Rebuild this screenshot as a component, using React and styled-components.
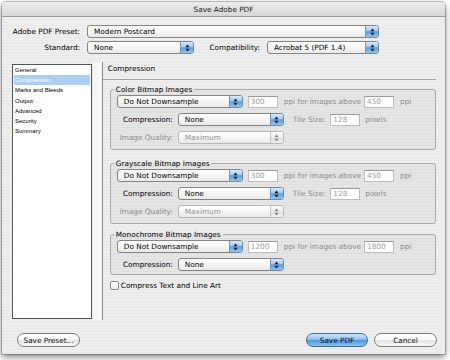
import styled, { createGlobalStyle } from "styled-components";

const GlobalStyle = createGlobalStyle`
  html, body {
    margin: 0;
    padding: 0;
    background: #ffffff;
  }
  body {
    font-family: "DejaVu Sans", "Liberation Sans", sans-serif;
    font-size: 7.3px;
    color: #000;
  }
  #root {
    width: 450px;
    height: 360px;
    overflow: hidden;
  }
`;

const Window = styled.div`
  margin: 2px 0 0 2px;
  width: 443px;
  height: 352px;
  border-radius: 4px 4px 0 0;
  background: repeating-linear-gradient(
    180deg,
    #eeeeee 0,
    #eeeeee 2px,
    #e8e8e8 2px,
    #e8e8e8 3px
  );
  box-shadow: 0 3px 7px rgba(0, 0, 0, 0.5), 0 0 0 1px rgba(0, 0, 0, 0.22);
  display: flex;
  flex-direction: column;
  overflow: hidden;
`;

const TitleBar = styled.div`
  flex: none;
  height: 14px;
  display: flex;
  align-items: center;
  justify-content: center;
  background: linear-gradient(#ededed, #d6d6d6);
  border-bottom: 1px solid #9c9c9c;
  color: #1a1a1a;
`;

const Body = styled.div`
  flex: 1;
  display: flex;
  flex-direction: column;
  padding: 8px 8px 0 10px;
`;

const Row = styled.div`
  display: flex;
  align-items: center;
  gap: ${(p) => p.$gap ?? 7}px;
  height: 13px;
  margin-top: ${(p) => p.$top ?? 0}px;
`;

const Label = styled.span`
  flex: none;
  width: ${(p) => (p.$w ? `${p.$w}px` : "auto")};
  text-align: ${(p) => (p.$w ? "right" : "left")};
  white-space: nowrap;
  color: ${(p) => (p.$dim ? "#8c8c8c" : "#000")};
  margin-left: ${(p) => p.$ml ?? 0}px;
`;

const PopupBox = styled.div`
  flex: none;
  box-sizing: border-box;
  width: ${(p) => p.$w}px;
  height: 13px;
  border: 1px solid ${(p) => (p.$off ? "#b9b9b9" : "#858585")};
  border-radius: 3px;
  background: linear-gradient(#ffffff, #f6f6f6 50%, #e8e8e8);
  display: flex;
  align-items: stretch;
  overflow: hidden;
  color: ${(p) => (p.$off ? "#909090" : "#000")};
`;

const PopupText = styled.span`
  flex: 1;
  padding-left: 6px;
  line-height: 11px;
  white-space: nowrap;
`;

const Cap = styled.span`
  flex: none;
  width: 12px;
  display: flex;
  align-items: center;
  justify-content: center;
  border-left: 1px solid ${(p) => (p.$off ? "#c4c4c4" : "#6f95c4")};
  background: ${(p) =>
    p.$off
      ? "linear-gradient(#fbfbfb, #ececec 50%, #dedede 51%, #f0f0f0)"
      : "linear-gradient(#d6eafc, #9ccaf4 45%, #559fe6 52%, #8cc6f6)"};
`;

const Popup = ({ w, children, off }) => (
  <PopupBox $w={w} $off={off}>
    <PopupText>{children}</PopupText>
    <Cap $off={off}>
      <svg width="5" height="8" viewBox="0 0 5 8">
        <polygon points="0.4,3.3 2.5,0.6 4.6,3.3" fill={off ? "#8a8a8a" : "#1c1c1c"} />
        <polygon points="0.4,4.7 2.5,7.4 4.6,4.7" fill={off ? "#8a8a8a" : "#1c1c1c"} />
      </svg>
    </Cap>
  </PopupBox>
);

const Field = styled.span`
  flex: none;
  box-sizing: border-box;
  width: ${(p) => p.$w}px;
  height: 12px;
  padding-left: 2px;
  line-height: 10px;
  border: 1px solid #bdbdbd;
  border-top-color: #9a9a9a;
  background: #ffffff;
  color: #a0a0a0;
  margin-left: ${(p) => p.$ml ?? 0}px;
`;

const Main = styled.div`
  display: flex;
  margin-top: 8px;
  height: 258px;
`;

const Sidebar = styled.ul`
  list-style: none;
  box-sizing: border-box;
  width: 80px;
  height: 255px;
  margin: 2px 0 0;
  padding: 0 1px;
  border: 1px solid #555555;
  background: #ffffff;
  font-family: "Liberation Sans", "DejaVu Sans", sans-serif;
  font-size: 6px;
`;

const Item = styled.li`
  height: 10.2px;
  line-height: 10.2px;
  padding-left: 1px;
  background: ${(p) => (p.$sel ? "#abcff4" : "transparent")};
  color: ${(p) => (p.$sel ? "#ffffff" : "#000")};
`;

const Gutter = styled.div`
  flex: none;
  width: 8px;
  margin: 0 1px 0 1px;
  background: linear-gradient(90deg, #f4f4f4, #fafafa);
`;

const Panel = styled.div`
  box-sizing: border-box;
  width: 336px;
  border-left: 1px solid #8e8e8e;
  display: flex;
  flex-direction: column;
`;

const Header = styled.div`
  height: 14px;
  line-height: 14px;
  padding-left: 5px;
`;

const Separator = styled.div`
  height: 1px;
  margin: 3px 1px 0 0;
  background: #a4a4a4;
`;

const Groups = styled.div`
  padding: 0 1px 0 7px;
  display: flex;
  flex-direction: column;
`;

const Group = styled.fieldset`
  margin: ${(p) => p.$top}px 0 0;
  padding: 0 6px ${(p) => p.$bottom ?? 5}px 6px;
  border: 1px solid #a9a9a9;
  border-radius: 3px;
  background: rgba(0, 0, 0, 0.035);
`;

const Legend = styled.legend`
  padding: 0 2px;
  margin-left: -3px;
  line-height: 9px;
  height: 9px;
`;

const GroupRows = styled.div`
  display: flex;
  flex-direction: column;
  gap: 5px;
  margin-top: 1px;
`;

const CheckRow = styled.label`
  display: flex;
  align-items: center;
  gap: 2px;
  margin: 6px 0 0 7px;
`;

const Check = styled.span`
  box-sizing: border-box;
  width: 9px;
  height: 9px;
  border: 1px solid #8a8a8a;
  border-radius: 2px;
  background: linear-gradient(#ffffff, #ececec);
`;

const Footer = styled.div`
  display: flex;
  align-items: center;
  margin-top: 13px;
  padding-left: 5px;
  gap: 6px;
`;

const Pill = styled.button`
  flex: none;
  box-sizing: border-box;
  width: ${(p) => p.$w}px;
  height: 14px;
  padding: 0;
  border-radius: 7px;
  border: 1px solid ${(p) => (p.$primary ? "#3f6ea8" : "#7d7d7d")};
  background: ${(p) =>
    p.$primary
      ? "linear-gradient(#cfe6fc, #92c4f3 45%, #4d98e4 52%, #86c3f6)"
      : "linear-gradient(#ffffff, #f5f5f5 50%, #e4e4e4 51%, #f7f7f7)"};
  font-family: inherit;
  font-size: 7.3px;
  color: #111;
  margin-left: ${(p) => (p.$push ? "auto" : "0")};
`;

const DownsampleRow = ({ a, b }) => (
  <Row $gap={0}>
    <Popup w={126}>Do Not Downsample</Popup>
    <Field $w={30} $ml={5}>{a}</Field>
    <Label $dim $ml={6}>ppi for images above</Label>
    <Field $w={30} $ml={3}>{b}</Field>
    <Label $dim $ml={6}>ppi</Label>
  </Row>
);

const CompressionRow = ({ tile }) => (
  <Row $gap={5}>
    <Label $w={56}>Compression:</Label>
    <Popup w={106}>None</Popup>
    {tile && (
      <>
        <Label $dim $ml={4}>Tile Size:</Label>
        <Field $w={30}>128</Field>
        <Label $dim>pixels</Label>
      </>
    )}
  </Row>
);

const QualityRow = () => (
  <Row $gap={5}>
    <Label $w={56} $dim>Image Quality:</Label>
    <Popup w={106} off>Maximum</Popup>
  </Row>
);

const sections = ["General", "Compression", "Marks and Bleeds", "Output", "Advanced", "Security", "Summary"];

export default function App() {
  return (
    <>
      <GlobalStyle />
      <Window>
        <TitleBar>Save Adobe PDF</TitleBar>
        <Body>
          <Row>
            <Label $w={68}>Adobe PDF Preset:</Label>
            <Popup w={292}>Modern Postcard</Popup>
          </Row>
          <Row $top={3}>
            <Label $w={68}>Standard:</Label>
            <Popup w={107}>None</Popup>
            <Label $w={59}>Compatibility:</Label>
            <Popup w={112}>Acrobat 5 (PDF 1.4)</Popup>
          </Row>
          <Main>
            <Sidebar>
              {sections.map((s) => (
                <Item key={s} $sel={s === "Compression"}>{s}</Item>
              ))}
            </Sidebar>
            <Gutter />
            <Panel>
              <Header>Compression</Header>
              <Separator />
              <Groups>
                <Group $top={5}>
                  <Legend>Color Bitmap Images</Legend>
                  <GroupRows>
                    <DownsampleRow a="300" b="450" />
                    <CompressionRow tile />
                    <QualityRow />
                  </GroupRows>
                </Group>
                <Group $top={9}>
                  <Legend>Grayscale Bitmap Images</Legend>
                  <GroupRows>
                    <DownsampleRow a="300" b="450" />
                    <CompressionRow tile />
                    <QualityRow />
                  </GroupRows>
                </Group>
                <Group $top={6} $bottom={3}>
                  <Legend>Monochrome Bitmap Images</Legend>
                  <GroupRows>
                    <DownsampleRow a="1200" b="1800" />
                    <CompressionRow />
                  </GroupRows>
                </Group>
              </Groups>
              <CheckRow>
                <Check />
                <span>Compress Text and Line Art</span>
              </CheckRow>
            </Panel>
          </Main>
          <Footer>
            <Pill $w={63}>Save Preset...</Pill>
            <Pill $w={62} $primary $push>Save PDF</Pill>
            <Pill $w={63}>Cancel</Pill>
          </Footer>
        </Body>
      </Window>
    </>
  );
}
